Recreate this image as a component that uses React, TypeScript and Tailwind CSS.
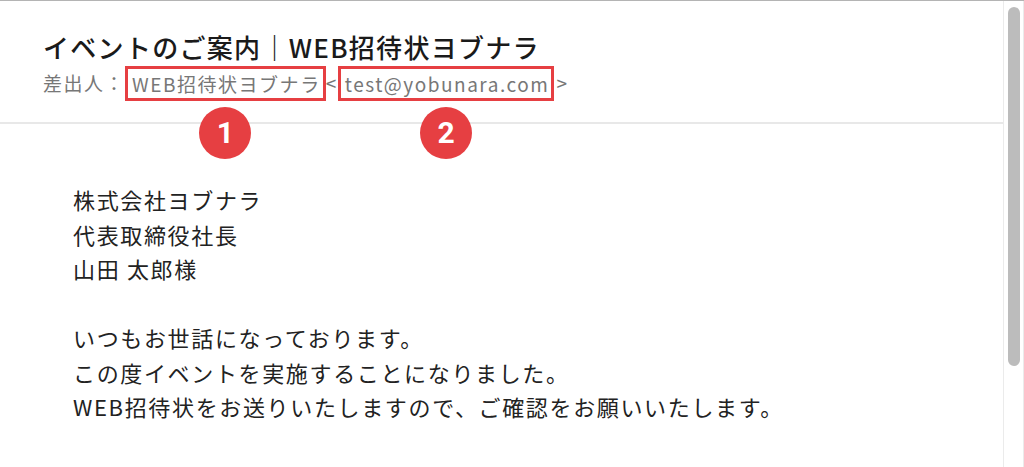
const FONT = { fontFamily: '"Noto Sans CJK JP", "Noto Sans", sans-serif' };

function Badge({ n }: { n: number }) {
  return (
    <span
      className="absolute left-1/2 top-[calc(100%+9px)] flex h-[52px] w-[52px] -translate-x-1/2 items-center justify-center rounded-full bg-[#e63f42] text-[30px] font-bold leading-none tracking-normal text-white"
      style={{ fontFamily: 'Roboto, "Liberation Sans", sans-serif' }}
    >
      {n}
    </span>
  );
}

function Marked({ children, n }: { children: React.ReactNode; n: number }) {
  return (
    <span className="relative inline-block border-[3px] border-[#e63f42] pl-[4px] pr-[2px] leading-[29px]">
      {children}
      <Badge n={n} />
    </span>
  );
}

const body = [
  "株式会社ヨブナラ",
  "代表取締役社長",
  "山田 太郎様",
  "",
  "いつもお世話になっております。",
  "この度イベントを実施することになりました。",
  "WEB招待状をお送りいたしますので、ご確認をお願いいたします。",
];

export default function App() {
  return (
    <div className="flex h-[467px] w-[1024px] overflow-hidden border-t border-[#b4b4b4] bg-white" style={FONT}>
      <main className="flex-1">
        <header className="h-[123px] border-b-2 border-[#e8e8e8] pl-[43px] pt-[28px]">
          <h1 className="text-[26px] font-medium leading-[36px] tracking-[0.05em] text-[#1a1a1a]">
            イベントのご案内｜WEB招待状ヨブナラ
          </h1>
          <p className="mt-[1px] flex items-center text-[19px] tracking-[0.08em] text-[#777]">
            <span>差出人：</span>
            <Marked n={1}>WEB招待状ヨブナラ</Marked>
            <span>&lt;</span>
            <Marked n={2}>test@yobunara.com</Marked>
            <span className="pl-[2px]">&gt;</span>
          </p>
        </header>
        <section className="pl-[73px] pt-[58px] text-[22px] leading-[34.5px] tracking-[0.075em] text-[#222]">
          {body.map((line, i) => (
            <p key={i} className="h-[34.5px]">
              {line}
            </p>
          ))}
        </section>
      </main>
      <aside className="flex w-[21px] justify-center border-x border-[#ebebeb] pt-[6px]">
        <div className="h-[359px] w-[12px] rounded-full bg-[#bcbcbc]" />
      </aside>
    </div>
  );
}
